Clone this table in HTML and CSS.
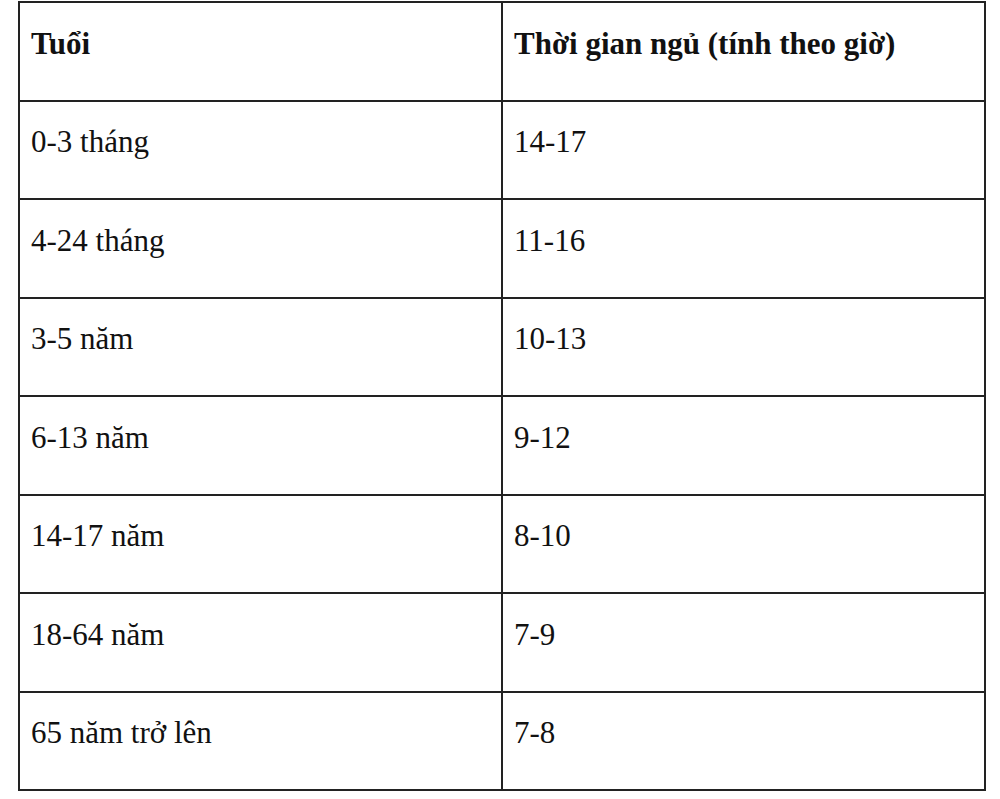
FILE: index.html
```html
<!DOCTYPE html>
<html lang="vi">
<head>
<meta charset="utf-8">
<link rel="stylesheet" href="styles.css">
</head>
<body>
<table class="sleep">
  <tr><th>Tuổi</th><th>Thời gian ngủ (tính theo giờ)</th></tr>
  <tr><td>0-3 tháng</td><td>14-17</td></tr>
  <tr><td>4-24 tháng</td><td>11-16</td></tr>
  <tr><td>3-5 năm</td><td>10-13</td></tr>
  <tr><td>6-13 năm</td><td>9-12</td></tr>
  <tr><td>14-17 năm</td><td>8-10</td></tr>
  <tr><td>18-64 năm</td><td>7-9</td></tr>
  <tr><td>65 năm trở lên</td><td>7-8</td></tr>
</table>
</body>
</html>
```
FILE: styles.css
```css
html, body {
  margin: 0;
  padding: 0;
  background: #fff;
}
body {
  padding: 1px 0 0 18px;
  font-family: "Liberation Serif", "Times New Roman", serif;
  color: #111;
}
.sleep {
  width: 968px;
  border-collapse: collapse;
  border: 2px solid #222;
  table-layout: fixed;
}
.sleep th, .sleep td {
  border: 2px solid #222;
  height: 98.5px;
  box-sizing: border-box;
  padding: 0 10px 16px 11px;
  font-size: 31px;
  text-align: left;
  vertical-align: middle;
  line-height: 1.2;
}
.sleep th {
  font-weight: bold;
}
```
